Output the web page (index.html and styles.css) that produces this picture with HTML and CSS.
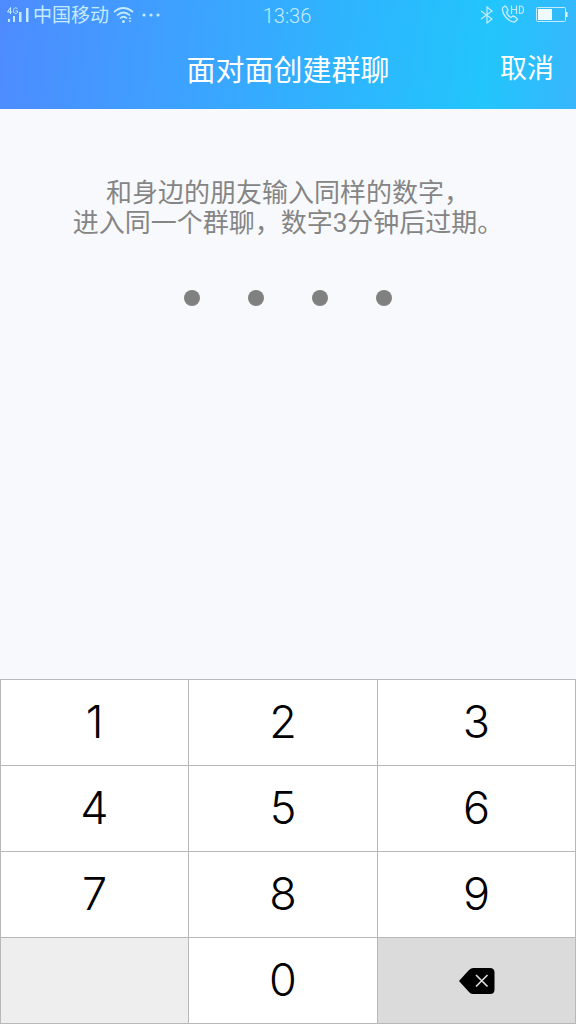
FILE: index.html
```html
<!DOCTYPE html>
<html lang="zh-CN">
<head>
<meta charset="utf-8">
<meta name="viewport" content="width=device-width, initial-scale=1">
<title>面对面创建群聊</title>
<link rel="stylesheet" href="styles.css">
</head>
<body>
<div class="app">
  <header class="header">
    <div class="status">
      <div class="status-side">
        <svg class="signal" viewBox="0 0 24 18" width="24" height="18" aria-label="4G">
          <g fill="none" stroke="currentColor">
            <path d="M4.500 8 V1.500 L1.500 6 H6" />
            <path d="M11.500 3.200 C10.500 1 7.500 1.500 7.500 4.500 C7.500 8 10.500 8 11.500 6.500 V5 H9.500" />
          </g>
          <g fill="currentColor">
            <path d="M2 13h2v3H2z M7 10h2v6H7z M13 6h2.500v10h-2.500z M20 2h2.500v14h-2.500z" />
          </g>
        </svg>
        <span class="carrier">中国移动</span>
        <svg class="wifi" viewBox="0 0 22 18" width="22" height="18" aria-label="Wi-Fi">
          <g fill="none" stroke="currentColor" stroke-width="1.700">
            <path d="M1 6 Q10 -2 20 6" />
            <path d="M4 9.500 Q10.500 3.500 17 9.500" />
            <path d="M7 12.500 Q10.500 9 14 12.500" />
          </g>
          <circle cx="10.500" cy="15.500" r="1.500" fill="currentColor" />
          <path d="M15.500 13l1.500-2 1.500 2z M15.500 14.500h3l-1.500 2z" fill="currentColor" />
        </svg>
        <svg class="more" viewBox="0 0 20 4" width="20" height="4" aria-label="更多">
          <g fill="currentColor"><circle cx="3" cy="2" r="1.600" /><circle cx="10" cy="2" r="1.600" /><circle cx="17" cy="2" r="1.600" /></g>
        </svg>
      </div>
      <time class="clock">13:36</time>
      <div class="status-side status-right">
        <svg viewBox="0 0 14 18" width="14" height="18" aria-label="蓝牙">
          <path d="M1 5 L12 13 L7 17 V1 L12 5 L1 13" fill="none" stroke="currentColor" stroke-width="1.200" />
        </svg>
        <svg class="call" viewBox="0 0 24 20" width="24" height="20" aria-label="HD">
          <path d="M4 3 L1.500 5 C.5 11 7.500 19 13.500 19 L16.500 16.500 C16.500 15.500 13 13 12 13 L10 14.500 C8 13.500 6 11 5.500 9.500 L7 7.500 C7 6.500 5 3 4 3 Z" fill="none" stroke="currentColor" stroke-width="1.300" />
          <path d="M10.500 2.500 V11 M15.500 2.500 V11 M10.500 6.500 H15.500 M18.500 3 V10.500 H19.500 C23.500 10.500 23.500 3 19.500 3 Z" fill="none" stroke="currentColor" stroke-width="1.200" />
        </svg>
        <svg class="battery" viewBox="0 0 32 16" width="32" height="16" aria-label="电量">
          <rect x=".5" y=".5" width="29" height="14" rx="1" fill="none" stroke="currentColor" />
          <path d="M2 2h14v11H2z M30 5h1.500v5H30z" fill="#effaff" />
        </svg>
      </div>
    </div>
    <div class="nav">
      <h1 class="title">面对面创建群聊</h1>
      <button class="cancel" type="button">取消</button>
    </div>
  </header>
  <main class="content">
    <p class="hint">和身边的朋友输入同样的数字，<br>进入同一个群聊，数字3分钟后过期。</p>
    <div class="dots" role="img" aria-label="四位数字">
      <span class="dot"></span><span class="dot"></span><span class="dot"></span><span class="dot"></span>
    </div>
  </main>
  <div class="keypad">
    <button class="key" type="button">1</button>
    <button class="key" type="button">2</button>
    <button class="key" type="button">3</button>
    <button class="key" type="button">4</button>
    <button class="key" type="button">5</button>
    <button class="key" type="button">6</button>
    <button class="key" type="button">7</button>
    <button class="key" type="button">8</button>
    <button class="key" type="button">9</button>
    <span class="key key-empty"></span>
    <button class="key" type="button">0</button>
    <button class="key key-delete" type="button" aria-label="删除">
      <svg viewBox="0 0 36 26" width="36" height="26">
        <path d="M0 13 L9.500 2.500 Q11.500 0 14 0 H31 Q35.500 0 35.500 4.500 V21.500 Q35.500 26 31 26 H14 Q11.500 26 9.500 23.500 Z" fill="#000" />
        <path d="M17 7 L28.500 18.500 M28.500 7 L17 18.500" stroke="#dbdbdb" stroke-width="1.700" />
      </svg>
    </button>
  </div>
</div>
</body>
</html>
```
FILE: styles.css
```css
* {
  box-sizing: border-box;
}

body {
  margin: 0;
  font-family: Roboto, "Noto Sans CJK SC", sans-serif;
  font-weight: 400;
}

.app {
  display: flex;
  flex-direction: column;
  min-height: 100vh;
  background: #f8f9fc;
}

.header {
  color: #fff;
  background: linear-gradient(97deg, #4e8bff 0%, #3f9fff 28%, #30b2fe 56%, #22c5fc 84%, #38b6fc 100%);
}

.status {
  display: grid;
  grid-template-columns: 1fr auto 1fr;
  align-items: center;
  height: 30px;
  padding: 0 8px 0 6px;
  color: #c4ebff;
}

.status-side {
  display: flex;
  align-items: center;
}

.status-right {
  justify-content: flex-end;
}

.carrier {
  margin: 0 4px 0 3px;
  padding-top: 2px;
  font-size: 19px;
  line-height: 28px;
}

.more {
  margin-left: 6px;
}

.clock {
  padding-top: 2px;
  font-size: 20px;
  font-weight: 300;
  line-height: 28px;
}

.call {
  margin: 0 11px 4px 7px;
}

.nav {
  display: grid;
  grid-template-columns: 1fr auto 1fr;
  align-items: center;
  height: 79px;
  padding: 0 22px;
}

.title {
  grid-column: 2;
  margin: 0;
  padding-top: 2px;
  font-size: 29px;
  font-weight: 400;
  line-height: 40px;
}

.cancel {
  justify-self: end;
  padding: 0 0 2px;
  border: 0;
  color: inherit;
  background: none;
  font: inherit;
  font-size: 27px;
  line-height: 36px;
}

.content {
  flex: 1;
  padding-top: 69px;
  text-align: center;
}

.hint {
  margin: 0;
  color: #858585;
  font-size: 26px;
  line-height: 30px;
}

.dots {
  display: flex;
  justify-content: center;
  gap: 48px;
  margin-top: 52px;
}

.dot {
  width: 16px;
  height: 16px;
  border-radius: 50%;
  background: #808080;
}

.keypad {
  display: grid;
  grid-template-columns: 187fr 188fr 197fr;
  grid-auto-rows: 85px;
  gap: 1px;
  padding: 1px;
  background: #b8b8b8;
}

.key {
  display: flex;
  align-items: center;
  justify-content: center;
  padding: 0 0 2px;
  border: 0;
  border-radius: 0;
  color: #000;
  background: #fff;
  font-family: Inter, sans-serif;
  font-size: 45px;
  font-weight: 350;
}

.key-empty {
  background: #eee;
}

.key-delete {
  padding: 0;
  background: #dbdbdb;
}
```
